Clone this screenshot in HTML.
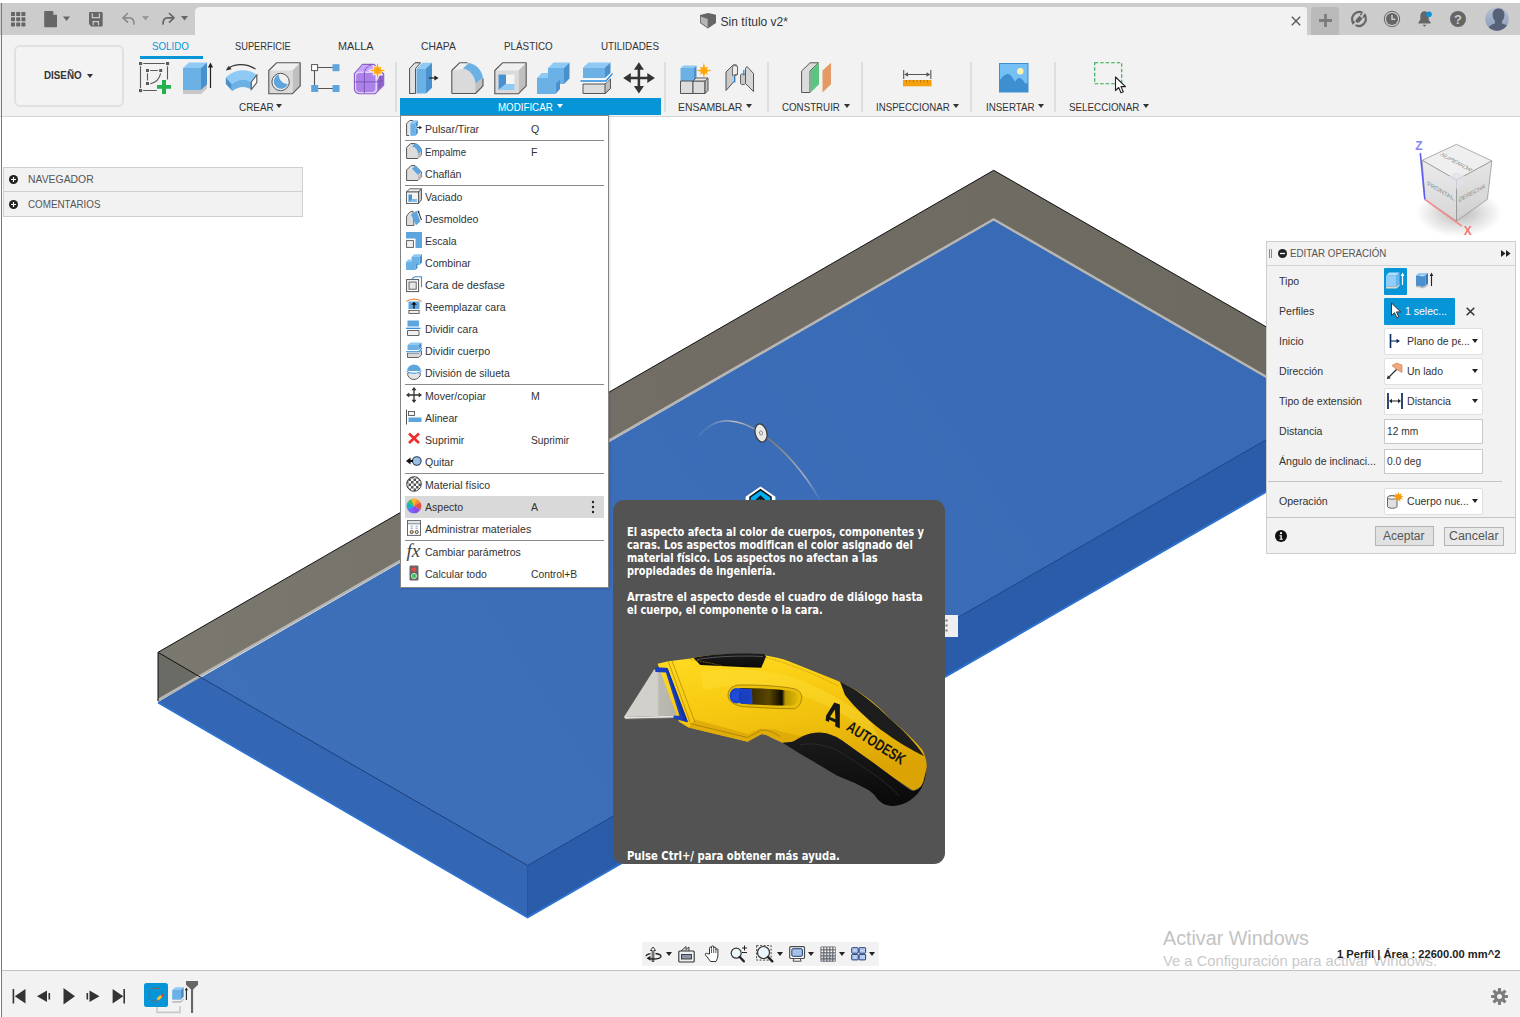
<!DOCTYPE html>
<html lang="es">
<head>
<meta charset="utf-8">
<title>Sin título v2* - Fusion 360</title>
<style>
html,body{margin:0;padding:0;}
body{width:1520px;height:1017px;overflow:hidden;background:#fff;position:relative;font-family:"Liberation Sans",Arial,sans-serif;font-size:11px;color:#333;}
.a{position:absolute;}
.t{position:absolute;white-space:nowrap;line-height:14px;height:14px;}
svg{position:absolute;overflow:visible;}
</style>
</head>
<body>
<!-- 3D scene -->
<svg class="a" style="left:0;top:0" width="1520" height="1017" viewBox="0 0 1520 1017">
  <defs>
    <linearGradient id="gTop" x1="0" y1="0" x2="1" y2="0">
      <stop offset="0" stop-color="#7b7870"/><stop offset=".45" stop-color="#716d65"/><stop offset="1" stop-color="#6c6961"/>
    </linearGradient>
    <linearGradient id="gBlue" gradientUnits="userSpaceOnUse" x1="300" y1="800" x2="1100" y2="250">
      <stop offset="0" stop-color="#3e70ba"/><stop offset="1" stop-color="#386ab5"/>
    </linearGradient>
  </defs>
  <!-- blue silhouette -->
  <polygon points="158,702.3 993.7,220.3 1367.4,436.2 1367.4,434 527.6,917.500" fill="url(#gBlue)"/>
  <!-- front-left face -->
  <polygon points="158,702.3 200.500,677.200 527.6,865.500 527.6,917.500" fill="#3367b4"/>
  <!-- front-right face -->
  <polygon points="527.6,865.500 1367.4,381.400 1367.4,433.700 527.6,917.500" fill="#2b5ca9"/>
  <!-- grey top strip -->
  <polygon points="158,652.300 993.7,170.3 1367.4,385 1367.4,436.2 993.7,220.3 158,701.200" fill="url(#gTop)"/>
  <!-- grey left triangle -->
  <polygon points="158,652.300 200.500,677.200 158,701.200" fill="#6b6b65"/>
  <!-- light line -->
  <polyline points="157.500,700.400 993.7,219.300 1367.4,435.200" fill="none" stroke="#b7b6b2" stroke-width="2.400"/>
  <!-- black edges -->
  <polyline points="158,701 158,652.300 993.7,170.3 1367.4,385" fill="none" stroke="#111" stroke-width="1"/>
  <line x1="158" y1="652.300" x2="200.500" y2="677.200" stroke="#111" stroke-width="1"/>
  <line x1="200.500" y1="677.200" x2="527.6" y2="865.500" stroke="#1c3f7c" stroke-width="1"/>
  <line x1="527.6" y1="865.500" x2="1367.4" y2="381.400" stroke="#1d468c" stroke-width="1"/>
  <line x1="527.6" y1="865.500" x2="527.6" y2="917" stroke="#2556a2" stroke-width="1"/>
  <!-- bright bottom edges -->
  <polyline points="158,702.3 527.6,917.300 1367.4,433.500" fill="none" stroke="#2e72cf" stroke-width="2"/>
</svg>
<!-- manipulators, distance field stub and view cube -->
<svg class="a" style="left:0;top:0" width="1520" height="1017" viewBox="0 0 1520 1017">
<defs>
<linearGradient id="arcG" gradientUnits="userSpaceOnUse" x1="699" y1="436" x2="820" y2="500"><stop offset="0" stop-color="#8fa3c4" stop-opacity=".2"/><stop offset=".18" stop-color="#b9bcc2"/><stop offset=".45" stop-color="#7b7b7d"/><stop offset=".6" stop-color="#8a8b8f"/><stop offset=".82" stop-color="#a9b2c2"/><stop offset="1" stop-color="#7d97c6" stop-opacity=".2"/></linearGradient>
<radialGradient id="vcSh" cx=".5" cy=".5" r=".5"><stop offset="0" stop-color="#000" stop-opacity=".28"/><stop offset=".55" stop-color="#000" stop-opacity=".12"/><stop offset="1" stop-color="#000" stop-opacity="0"/></radialGradient>
<linearGradient id="vcF" x1="0" y1="0" x2="0" y2="1"><stop offset="0" stop-color="#ebebeb"/><stop offset="1" stop-color="#d6d6d6"/></linearGradient>
<linearGradient id="vcR" x1="0" y1="0" x2="0" y2="1"><stop offset="0" stop-color="#e6e6e6"/><stop offset="1" stop-color="#cfcfcf"/></linearGradient>
</defs>
<path d="M699 435.500C708 425 718 420.500 727.400 420.700 740 421 751 426 761 433 785 450 805 474 819.800 499.500" fill="none" stroke="url(#arcG)" stroke-width="1.500"/>
<ellipse cx="761" cy="433" rx="5.800" ry="9.200" transform="rotate(-14 761 433)" fill="#e9e9e9" stroke="#3c3c3c" stroke-width="1.300"/>
<ellipse cx="761" cy="433" rx="1.500" ry="2" transform="rotate(-14 761 433)" fill="none" stroke="#666" stroke-width=".7"/>
<!-- direction arrow glyph (mostly hidden behind the tooltip) -->
<path d="M760.500 487.300L774.700 497V508H746.300V497z" fill="#fff" stroke="#fff" stroke-width="1.400" stroke-linejoin="round"/>
<path d="M760.500 488.800L771.800 496.800V508H749.200V496.800z" fill="#101418"/>
<path d="M760.500 490.700L770.300 497.600V508H750.700V497.600z" fill="#00aeef"/>
<path d="M754.500 502.300L760.500 496.500 766.500 502.300M760.500 497.500V508" fill="none" stroke="#101418" stroke-width="1.900"/>
<!-- distance field stub -->
<rect x="945" y="615" width="13" height="22" fill="#efefef"/>
<circle cx="946.500" cy="620.400" r="1.250" fill="#8c8c8c"/><circle cx="946.500" cy="625.500" r="1.250" fill="#8c8c8c"/><circle cx="946.500" cy="630.500" r="1.250" fill="#8c8c8c"/>
<!-- view cube -->
<ellipse cx="1459" cy="213" rx="43" ry="24" fill="url(#vcSh)"/>
<path d="M1456.500 144.300L1491.900 160.900 1456.500 180.100 1422.200 160.300z" fill="#efefef" stroke="#8d8d8d" stroke-width=".7"/>
<path d="M1422.200 160.300L1456.500 180.100 1456.500 221 1424.800 199.300z" fill="url(#vcF)" stroke="#8d8d8d" stroke-width=".7"/>
<path d="M1456.500 180.100L1491.900 160.900 1487.400 199.300 1456.500 221z" fill="url(#vcR)" stroke="#8d8d8d" stroke-width=".7"/>
<path d="M1456.500 172l7.500 4v8.500l-7.500 4.500-7.500-4.500V176z" fill="#dfe3ea" opacity=".7"/>
<g font-family="Liberation Sans,Arial,sans-serif" font-size="6.800" fill="#858a90" text-anchor="middle">
<text transform="matrix(.8575 .495 .065 .975 1422.200 160.300)" x="20" y="23.500">FRONTAL</text>
<text transform="matrix(.8 -.43 -.1 .97 1458 181)" x="20" y="23.500">DERECHA</text>
<text transform="matrix(.8575 .47 -.8575 .4 1456.500 144.300)" x="20.500" y="23">SUPERIOR</text>
</g>
<path d="M1420.300 153.200L1424.800 199.300" stroke="#5c5cf2" stroke-width="1.600"/>
<path d="M1424.800 199.300L1461.800 226" stroke="#f28c8c" stroke-width="1.600"/>
<text x="1419" y="150" font-family="Liberation Sans,Arial,sans-serif" font-size="12" font-weight="bold" fill="#8686f7" text-anchor="middle">Z</text>
<text x="1467.800" y="235" font-family="Liberation Sans,Arial,sans-serif" font-size="12" font-weight="bold" fill="#f27878" text-anchor="middle">X</text>
</svg>
<!-- title / tab strip -->
<div class="a" style="left:0;top:3px;width:1520px;height:32px;background:#cccccc"></div>
<div class="a" style="left:195px;top:7px;width:1112px;height:28px;background:#f2f2f2;border-radius:5px 3px 0 0"></div>
<div class="a" style="left:1311px;top:7px;width:28px;height:28px;background:#bababa;border-radius:3px 3px 0 0"></div>
<!-- ribbon background -->
<div class="a" style="left:0;top:35px;width:1520px;height:81px;background:#f2f2f2"></div>
<div class="a" style="left:0;top:116px;width:1520px;height:1px;background:#d4d4d4"></div>
<!-- window left edge -->
<div class="a" style="left:1px;top:3px;width:1px;height:1014px;background:#7a7a7a"></div>
<!-- quick access icons -->
<svg style="left:11px;top:12px" width="15" height="15" viewBox="0 0 15 15"><g fill="#666">
<rect x="0" y="0" width="4" height="4" rx=".6"/><rect x="5.2" y="0" width="4" height="4" rx=".6"/><rect x="10.4" y="0" width="4" height="4" rx=".6"/>
<rect x="0" y="5.2" width="4" height="4" rx=".6"/><rect x="5.2" y="5.2" width="4" height="4" rx=".6"/><rect x="10.4" y="5.2" width="4" height="4" rx=".6"/>
<rect x="0" y="10.4" width="4" height="4" rx=".6"/><rect x="5.2" y="10.4" width="4" height="4" rx=".6"/><rect x="10.4" y="10.4" width="4" height="4" rx=".6"/></g></svg>
<svg style="left:44px;top:11px" width="30" height="17" viewBox="0 0 30 17"><path d="M1 0h8l4 4v11.5a.8.8 0 0 1-.8.8H1a.8.8 0 0 1-.8-.8V.8A.8.8 0 0 1 1 0z" fill="#666"/><path d="M9.3 0v3.8H13z" fill="#ccc"/><path d="M19 5.5h7l-3.5 4.5z" fill="#666"/></svg>
<svg style="left:89px;top:12px" width="13.700" height="14.600" viewBox="0 0 15 15" preserveAspectRatio="none"><path d="M1 0h13a1 1 0 0 1 1 1v12.8a1 1 0 0 1-1 1H2.5L0 12.3V1a1 1 0 0 1 1-1z" fill="#666"/><path d="M3.6 1.2v4.6h7.8V1.2M4.6 13.6V9.8h5.8v3.8" fill="none" stroke="#ccc" stroke-width="1.3"/></svg>
<svg style="left:121px;top:12px" width="70" height="15" viewBox="0 0 70 15"><path d="M6.5 1.5L2 5.8l4.500 4.300M2.300 5.800h6.200c3.200 0 4.500 2.200 4.500 6.200" fill="none" stroke="#8c8c8c" stroke-width="1.7" stroke-linecap="round" stroke-linejoin="round"/><path d="M21 4h7l-3.500 4.500z" fill="#999"/><path transform="translate(2 0)" d="M46.500 1.500L51 5.800l-4.500 4.300M50.700 5.800h-6.200c-3.200 0-4.500 2.200-4.500 6.200" fill="none" stroke="#666" stroke-width="1.700" stroke-linecap="round" stroke-linejoin="round"/><path d="M60 4h7l-3.500 4.500z" fill="#666"/></svg>
<!-- document tab title -->
<svg style="left:700px;top:13px" width="17" height="16" viewBox="0 0 17 16"><path d="M0 2.100L8.200 .100 16 1.700V10L7.800 15.500 0 10z" fill="#666"/><path d="M.8 3.400L7.700 6.100v8.500L.8 9.600z" fill="#b5b5b5"/></svg>
<span class="t" style="left:720.600px;top:14.700px;font-size:12px;color:#333;letter-spacing:0px">Sin título v2*</span>
<svg style="left:1291px;top:16px" width="10" height="10" viewBox="0 0 10 10"><path d="M.8.8l8.400 8.400M9.200.8L.8 9.200" stroke="#555" stroke-width="1.300"/></svg>
<svg style="left:1318.500px;top:14px" width="13" height="13" viewBox="0 0 13 13"><path d="M6.500 0v13M0 6.500h13" stroke="#7c7c7c" stroke-width="2.800"/></svg>
<!-- right icons -->
<svg style="left:1350px;top:10px" width="18" height="18" viewBox="0 0 18 18"><path d="M3.300 12.800A7 7 0 0 1 12.500 2.900M14.700 5.200A7 7 0 0 1 5.500 15.100" fill="none" stroke="#666" stroke-width="2.100"/><path d="M1.200 11.200l4.300 .3-2.600 3.400zM16.800 6.800l-4.300-.3 2.600-3.400z" fill="#666"/><path d="M6.200 9.200l3.400-3.400 3 3-3.400 3.400c-1 1-2.300 .8-3-.1-.8-.8-1-2 0-2.900z" fill="#666"/><path d="M10.300 5.200l1.800-1.800M12.800 7.700l1.800-1.800" stroke="#666" stroke-width="1.300"/></svg>
<svg style="left:1383px;top:10px" width="18" height="18" viewBox="0 0 18 18"><circle cx="9" cy="9" r="7.700" fill="none" stroke="#666" stroke-width="1"/><circle cx="9" cy="9" r="6" fill="#666"/><path d="M9 5v4.300h3.300" fill="none" stroke="#ccc" stroke-width="1.500"/></svg>
<svg style="left:1418px;top:10px" width="15" height="18" viewBox="0 0 15 18"><path d="M6.500 1.200c-2.700 0-4.200 2.100-4.200 4.800v3.700L.4 12.500v1h12.200v-1l-1.900-2.800V6c0-2.700-1.500-4.800-4.200-4.800z" fill="#666"/><path d="M4.600 14.800h3.800l-1.900 1.900z" fill="#666"/><circle cx="11" cy="4.300" r="2.800" fill="#0696d7"/></svg>
<svg style="left:1449px;top:10px" width="18" height="18" viewBox="0 0 18 18"><circle cx="9" cy="9" r="8" fill="#666"/><text x="9" y="13.500" font-family="Liberation Sans,sans-serif" font-size="13" font-weight="bold" fill="#ccc" text-anchor="middle">?</text></svg>
<svg style="left:1485px;top:7px" width="24" height="24" viewBox="0 0 24 24"><defs><linearGradient id="av" x1="0" y1="0" x2="0" y2="1"><stop offset="0" stop-color="#b9c3d4"/><stop offset="1" stop-color="#8799b9"/></linearGradient><clipPath id="avc"><circle cx="12" cy="12" r="11.800"/></clipPath></defs><circle cx="12" cy="12" r="11.800" fill="url(#av)"/><g clip-path="url(#avc)" fill="#566178"><path d="M13.500 1.500c3.800 0 6 2.600 6 6.200 0 2.600-1.200 5.200-2.600 6.600v2.300c3.500 1 6.500 2.300 7.500 4.500v4H3v-3.500c1-2.400 3.800-4 7-5v-2.600C8.600 12.600 7.600 10.300 7.600 7.700c0-3.600 2.100-6.200 5.900-6.200z"/></g></svg>
<!-- ribbon: workspace button, separators, active group -->
<div class="a" style="left:13.500px;top:45px;width:110px;height:61.500px;border:2px solid #e0e0e0;border-radius:6px;box-sizing:border-box;background:#f3f3f3"></div>
<div class="a" style="left:140px;top:56px;width:63px;height:3px;background:#0696d7"></div>
<div class="a" style="left:400px;top:98px;width:261px;height:17px;background:#0696d7"></div>
<div class="a" style="left:395.2px;top:62px;width:2px;height:50px;background:#dedede"></div>
<div class="a" style="left:664.2px;top:62px;width:2px;height:50px;background:#dedede"></div>
<div class="a" style="left:766.7px;top:62px;width:2px;height:50px;background:#dedede"></div>
<div class="a" style="left:860.7px;top:62px;width:2px;height:50px;background:#dedede"></div>
<div class="a" style="left:970.2px;top:62px;width:2px;height:50px;background:#dedede"></div>
<div class="a" style="left:1053.7px;top:62px;width:2px;height:50px;background:#dedede"></div>
<!-- CREAR icons -->
<svg style="left:139px;top:62px" width="33" height="32" viewBox="0 0 33 32"><g fill="none" stroke="#5a5a5a" stroke-width="1.100"><path d="M4.100 1.500h21.700M1.500 4.200v21.800M28.500 4.200v13.400M4.100 28.500h13.700"/><path d="M11.200 8.500h7.600M8.500 11.300v7.300"/><path d="M21.600 11.300c-1 5.500-4.500 9-10.400 10.500"/></g><g fill="#5a5a5a"><rect x="0" y="0" width="3.100" height="3.100"/><rect x="27" y="0" width="3.100" height="3.100"/><rect x="0" y="27" width="3.100" height="3.100"/><rect x="7" y="7" width="3" height="3"/><rect x="20.200" y="7" width="3" height="3"/><rect x="7" y="20" width="3" height="3"/></g><path d="M23 18.100h4v5h5v3.700h-5v5.100h-4v-5.100h-5v-3.700h5z" fill="#22b14c"/></svg>
<svg style="left:183px;top:61.500px" width="31" height="33" viewBox="0 0 31 33"><path d="M0 28l18 0 6-5.500v4L18 32H0z" fill="#c8c8c8"/><path d="M0 6L6 .5h18L18 6z" fill="#8fcaf5"/><path d="M0 6h18v22H0z" fill="#6cb1e6"/><path d="M18 6l6-5.500v22L18 28z" fill="#4a90cc"/><path d="M27.500 3v23" stroke="#222" stroke-width="1.200"/><path d="M27.500 .5l2.600 5h-5.200z" fill="#222"/></svg>
<svg style="left:225px;top:63px" width="33" height="29" viewBox="0 0 33 29"><path d="M2 6.500C8 .8 20 -.6 30.500 6" fill="none" stroke="#333" stroke-width="1.200"/><path d="M.8 7.500l5.700-1.200-2.800-3.600z" fill="#333"/><path d="M.8 14.500c8-8.500 22-10 31-2.500l-5.500 7c-6-4-13-3.500-19.500 2z" fill="#8fcaf5"/><path d="M.8 14.500l6 6.500v6.500L.8 21z" fill="#4a90cc"/><path d="M6.800 21c6.500-5.500 13.500-6 19.500-2v7.500c-6-4-13-3.500-19.500 2z" fill="#6cb1e6"/><path d="M26.300 19l5.500-7v7.500l-5.500 7z" fill="#fff" stroke="#555" stroke-width="1.100"/></svg>
<svg style="left:268px;top:61.500px" width="33" height="33" viewBox="0 0 33 33"><path d="M.8 8.500L8.500 .8h23.700L24.500 8.500z" fill="#f0f0f0"/><path d="M24.500 8.500L32.200 .8v23L24.500 31.700z" fill="#c0c0c0"/><rect x=".8" y="8.500" width="23.700" height="23.200" fill="#dadada"/><path d="M.8 8.500L8.500 .8h23.700v23L24.500 31.700H.8z" fill="none" stroke="#555" stroke-width="1.100" stroke-linejoin="round"/><circle cx="12.600" cy="20" r="8.700" fill="#f0f0f0" stroke="#555" stroke-width="1"/><path d="M10.700 12.600a7.300 7.300 0 1 0 9.200 9.600c-5.300-.3-9-4-9.200-9.600z" fill="#5ea5de"/></svg>
<svg style="left:310.500px;top:64px" width="30" height="29" viewBox="0 0 30 29"><path d="M3.500 3.500h22M3.500 3.500v21M3.500 24.500h22" fill="none" stroke="#555" stroke-width="1.100"/><rect x=".6" y=".6" width="6" height="6" fill="#fff" stroke="#555" stroke-width="1"/><rect x="21.500" y=".2" width="7" height="7" fill="#5ea5de"/><rect x=".2" y="21" width="7" height="7" fill="#5ea5de"/><rect x="21.500" y="21" width="7" height="7" fill="#5ea5de"/></svg>
<svg style="left:354px;top:61px" width="33" height="34" viewBox="0 0 33 34"><path d="M.4 12.600L8.500 3.400H20L29.700 13V24L21 32.800H5.800C2.500 32.800 .4 30.800 .4 27.500z" fill="#dfcffb" stroke="#8a5cc4" stroke-width="1.100" stroke-linejoin="round"/><path d="M2 11.600L8.900 4.300H19.500L25 10.500H5c-1.500 0-2.500 .400-3 1.100z" fill="#c9a2ff"/><path d="M23.300 16L29.200 13.800V23.800L23.300 29.800z" fill="#8f62d0"/><rect x="2.100" y="11.900" width="19.300" height="19" rx="3.600" fill="#ac82e8"/><path d="M10.400 11.500V32.400M.6 20.900H22.500L29.300 19.200M10.400 12C10.700 8 13 5 17.500 4M26.300 15V26.500" fill="none" stroke="#7e57b8" stroke-width="1"/><path d="M23.50 1.20 24.69 6.64 27.74 5.26 26.36 8.31 31.80 9.50 26.36 10.69 27.74 13.74 24.69 12.36 23.50 17.80 22.31 12.36 19.26 13.74 20.64 10.69 15.20 9.50 20.64 8.31 19.26 5.26 22.31 6.64z" fill="#fff" stroke="#fff" stroke-width="1.600" stroke-linejoin="round" opacity=".85"/><path d="M23.50 1.20 24.69 6.64 27.74 5.26 26.36 8.31 31.80 9.50 26.36 10.69 27.74 13.74 24.69 12.36 23.50 17.80 22.31 12.36 19.26 13.74 20.64 10.69 15.20 9.50 20.64 8.31 19.26 5.26 22.31 6.64z" fill="#ffa600"/></svg>
<!-- MODIFICAR icons -->
<svg style="left:409px;top:61.500px" width="30" height="33" viewBox="0 0 30 33"><path d="M.6 6.500L6 .8h5M.6 6.500v25h5.500" fill="#dcdcdc" stroke="#555" stroke-width="1"/><path d="M.6 6.500L6 .8h5.500L6.500 6.500v25H.6z" fill="#e2e2e2" stroke="#555" stroke-width="1"/><path d="M7.500 6.500L13.500 .8h9.500L17 6.500z" fill="#8fcaf5"/><path d="M7.500 6.500H17v25H7.500z" fill="#6cb1e6"/><path d="M17 6.500L23 .8v25L17 31.500z" fill="#4a90cc"/><path d="M20 16h7.500" stroke="#222" stroke-width="1.200"/><path d="M29.600 16l-4.200 2.600v-5.200z" fill="#222"/></svg>
<svg style="left:451px;top:61.500px" width="33" height="33" viewBox="0 0 33 33"><path d="M.8 31.500V8.500L8.500 .8h8c7 1 14 7 15.500 15v8l-7.500 7.700z" fill="#dadada"/><path d="M.8 8.500L8.500 .8h8L12 7z" fill="#f0f0f0"/><path d="M24.500 31.500V22l7.500-6.200v8z" fill="#c0c0c0"/><path d="M12 6.500L18 .9c7 1.200 12.500 6.500 14 14.500l-7.300 6.400c-.8-8-5.700-14-12.700-15.300z" fill="#6cb1e6"/><path d="M.8 31.500V8.500L8.500 .8h8M32 16.500v7.300l-7.500 7.700H.8" fill="none" stroke="#555" stroke-width="1.100" stroke-linejoin="round"/></svg>
<svg style="left:494px;top:61.500px" width="33" height="33" viewBox="0 0 33 33"><path d="M.8 8.500L8.500 .8h23.700L24.500 8.500z" fill="#f0f0f0"/><path d="M24.500 8.500L32.200 .8v23L24.500 31.700z" fill="#c0c0c0"/><rect x=".8" y="8.500" width="23.700" height="23.200" fill="#dadada"/><path d="M.8 8.500L8.500 .8h23.700v23L24.500 31.700H.8z" fill="none" stroke="#555" stroke-width="1.100" stroke-linejoin="round"/><rect x="4.500" y="12.500" width="16" height="15.500" fill="#f4f4f4"/><path d="M4.500 12.500h7.500v9.500l-7.500 6z" fill="#4a90cc"/><path d="M12 22h8.500v6h-16z" fill="#8fcaf5"/></svg>
<svg style="left:537px;top:61.500px" width="33" height="33" viewBox="0 0 33 33"><path d="M11 6L16.500 .5h16L27 6z" fill="#8fcaf5"/><path d="M27 6L32.500 .5v16L27 22z" fill="#4a90cc"/><path d="M0 16l4.500-5H11l0 5z" fill="#8fcaf5"/><path d="M11 6h16v16h-8.500v10H0V16h11z" fill="#6cb1e6"/><path d="M18.500 22L23 17.500V27l-4.500 5z" fill="#4a90cc"/></svg>
<svg style="left:579.500px;top:61.500px" width="34" height="33" viewBox="0 0 34 33"><path d="M3 22h22l5.500-5v9.500L25 31.500H3z" fill="#dcdcdc" stroke="#555" stroke-width="1"/><path d="M25 22l5.500-5v9.500L25 31.500z" fill="#bdbdbd" stroke="#555" stroke-width="1"/><path d="M3 5.500L8.500 .5h22L25 5.500z" fill="#8fcaf5"/><path d="M3 5.500h22V16H3z" fill="#6cb1e6"/><path d="M25 5.500l5.500-5V11L25 16z" fill="#4a90cc"/><path d="M.5 19h25.500l6.500-7.500" fill="none" stroke="#fff" stroke-width="3"/><path d="M.5 19h25.500l6.500-7.500" fill="none" stroke="#1e88e0" stroke-width="1.300"/></svg>
<svg style="left:623px;top:62px" width="32" height="32" viewBox="0 0 32 32"><path d="M15.900 5v22M5 15.900h22" stroke="#333" stroke-width="2.500"/><path d="M15.900 .200l5 7.600h-10zM15.900 31.600l5-7.600h-10zM.200 15.900l7.600-5v10zM31.900 15.900l-7.600-5v10z" fill="#333"/></svg>
<!-- ENSAMBLAR icons -->
<svg style="left:679.500px;top:62px" width="33" height="32" viewBox="0 0 33 32"><path d="M.5 6L3.500 3.500h13L14 6z" fill="#8fcaf5"/><path d="M.5 6H14v13H.5z" fill="#6cb1e6"/><path d="M14 6l2.500-2.500v11L14 19z" fill="#4a90cc"/><path d="M.5 19H13v12.500H.5z" fill="#dcdcdc" stroke="#555" stroke-width="1"/><path d="M13 19h12v12.500H13z" fill="#dcdcdc" stroke="#555" stroke-width="1"/><path d="M13 19l3-3h12l-3 3z" fill="#ececec" stroke="#555" stroke-width="1"/><path d="M25 19l3-3v12.500l-3 3z" fill="#bdbdbd" stroke="#555" stroke-width="1"/><path d="M23.90 0.60 25.05 5.83 28.00 4.50 26.67 7.45 31.90 8.60 26.67 9.75 28.00 12.70 25.05 11.37 23.90 16.60 22.75 11.37 19.80 12.70 21.13 9.75 15.90 8.60 21.13 7.45 19.80 4.50 22.75 5.83z" fill="#ffa600"/></svg>
<svg style="left:724.500px;top:63.500px" width="30" height="29" viewBox="0 0 30 29"><path d="M1 8L7.500 1.500c2-1.500 5-1 5 1.500v7.500l-3 1.500V17L1 26.500z" fill="#c9c9c9" stroke="#555" stroke-width="1"/><path d="M7.500 3.500c0-2.500 5-2.500 5 0V10l-5 1.500z" fill="#ececec" stroke="#555" stroke-width=".8"/><path d="M20.500 4.500L22 2.500l6.500 7v18l-8-8z" fill="#d6d6d6" stroke="#555" stroke-width="1"/><path d="M15.500 11c0-1.500 5-1.500 5 0v8.500c0 1.500-5 1.500-5 0z" fill="#c9c9c9" stroke="#555" stroke-width=".9"/><path d="M9.800 12.500v6M18.800 6v5.500" stroke="#1e88e0" stroke-width="1.200"/></svg>
<!-- CONSTRUIR icon -->
<svg style="left:801px;top:62px" width="31" height="31" viewBox="0 0 31 31"><path d="M.6 9L9 .8h8.500L9 9v21.500H.6z" fill="#dcdcdc" stroke="#555" stroke-width="1"/><path d="M9.600 9L18 .8v21.500L9.600 30.500z" fill="#5bc47e"/><path d="M21.500 8.500L30 .8v21.500L21.500 30.500z" fill="#e49a64"/></svg>
<!-- INSPECCIONAR icon -->
<svg style="left:903px;top:70px" width="29" height="17" viewBox="0 0 29 17"><path d="M.7 0v9M27.800 0v9M2.500 4.500h23.500" stroke="#555" stroke-width="1.100" fill="none"/><path d="M1.200 4.500l3.800-2.200v4.400zM27.300 4.500l-3.800-2.200v4.400z" fill="#555"/><rect x="0" y="10" width="28.500" height="6.300" fill="#f5a10e"/><path d="M3.500 10v2.500M7 10v1.800M10.500 10v2.500M14 10v1.800M17.500 10v2.500M21 10v1.800M24.500 10v2.500" stroke="#a86a00" stroke-width=".8"/></svg>
<!-- INSERTAR icon -->
<svg style="left:999px;top:63px" width="30" height="30" viewBox="0 0 30 30"><rect x=".5" y=".5" width="28.500" height="28.500" fill="#74c0f5" stroke="#3f8fd0" stroke-width="1"/><path d="M.5 18c3-5 6-7 8.500-7s5 4 7 8c1.500-3 3-4 4.500-4s3.500 2 5 4.500c1 1.200 2 1.500 3.500 .5V29H.5z" fill="#3d8fcf"/><circle cx="21.300" cy="8.200" r="3.200" fill="#fdf1b0"/></svg>
<!-- SELECCIONAR icon -->
<svg style="left:1093.500px;top:62px" width="33" height="32" viewBox="0 0 33 32"><rect x=".7" y=".7" width="27" height="21" fill="none" stroke="#2aa84a" stroke-width="1.100" stroke-dasharray="3.500 2"/><path d="M21.500 15v13.500l3.200-3 2.300 5.300 2.300-1-2.300-5.200h4.500z" fill="#fff" stroke="#222" stroke-width="1.100" stroke-linejoin="round"/></svg>
<!-- toolbar text -->
<span class="t" style="left:152.3px;top:39.2px;font-size:11px;color:#0696d7;transform:scaleX(0.888);transform-origin:0 0;">SOLIDO</span>
<span class="t" style="left:234.7px;top:39.2px;font-size:11px;color:#333;transform:scaleX(0.845);transform-origin:0 0;">SUPERFICIE</span>
<span class="t" style="left:337.6px;top:39.2px;font-size:11px;color:#333;transform:scaleX(0.984);transform-origin:0 0;">MALLA</span>
<span class="t" style="left:420.6px;top:39.2px;font-size:11px;color:#333;transform:scaleX(0.938);transform-origin:0 0;">CHAPA</span>
<span class="t" style="left:503.9px;top:39.2px;font-size:11px;color:#333;transform:scaleX(0.895);transform-origin:0 0;">PLÁSTICO</span>
<span class="t" style="left:601.4px;top:39.2px;font-size:11px;color:#333;transform:scaleX(0.895);transform-origin:0 0;">UTILIDADES</span>
<span class="t" style="left:238.6px;top:100.2px;font-size:11px;color:#333;transform:scaleX(0.901);transform-origin:0 0;">CREAR</span>
<svg style="left:276.3px;top:104px" width="6" height="4" viewBox="0 0 6 4"><path d="M0 0h6L3 4z" fill="#333"/></svg>
<span class="t" style="left:498.1px;top:100.2px;font-size:11px;color:#fff;transform:scaleX(0.886);transform-origin:0 0;">MODIFICAR</span>
<svg style="left:556.6px;top:104px" width="6" height="4" viewBox="0 0 6 4"><path d="M0 0h6L3 4z" fill="#fff"/></svg>
<span class="t" style="left:678.4px;top:100.2px;font-size:11px;color:#333;transform:scaleX(0.949);transform-origin:0 0;">ENSAMBLAR</span>
<svg style="left:745.5px;top:104px" width="6" height="4" viewBox="0 0 6 4"><path d="M0 0h6L3 4z" fill="#333"/></svg>
<span class="t" style="left:782.0px;top:100.2px;font-size:11px;color:#333;transform:scaleX(0.885);transform-origin:0 0;">CONSTRUIR</span>
<svg style="left:843.7px;top:104px" width="6" height="4" viewBox="0 0 6 4"><path d="M0 0h6L3 4z" fill="#333"/></svg>
<span class="t" style="left:875.6px;top:100.2px;font-size:11px;color:#333;transform:scaleX(0.880);transform-origin:0 0;">INSPECCIONAR</span>
<svg style="left:953.4px;top:104px" width="6" height="4" viewBox="0 0 6 4"><path d="M0 0h6L3 4z" fill="#333"/></svg>
<span class="t" style="left:985.6px;top:100.2px;font-size:11px;color:#333;transform:scaleX(0.892);transform-origin:0 0;">INSERTAR</span>
<svg style="left:1038.0px;top:104px" width="6" height="4" viewBox="0 0 6 4"><path d="M0 0h6L3 4z" fill="#333"/></svg>
<span class="t" style="left:1068.9px;top:100.2px;font-size:11px;color:#333;transform:scaleX(0.892);transform-origin:0 0;">SELECCIONAR</span>
<svg style="left:1143.0px;top:104px" width="6" height="4" viewBox="0 0 6 4"><path d="M0 0h6L3 4z" fill="#333"/></svg>
<span class="t" style="left:43.7px;top:67.8px;font-size:11px;color:#333;font-weight:bold;transform:scaleX(0.892);transform-origin:0 0;">DISEÑO</span>
<svg style="left:87.400px;top:74px" width="6" height="4" viewBox="0 0 6 4"><path d="M0 0h6L3 4z" fill="#333"/></svg>
<!-- MODIFICAR drop-down menu -->
<div class="a" style="left:400px;top:115px;width:207px;height:470.500px;background:#fff;border:1px solid #858585;box-shadow:1px 1px 2px rgba(0,0,0,.12)"></div>
<div class="a" style="left:405px;top:496px;width:199px;height:22px;background:#d9d9d9"></div>
<div class="a" style="left:405px;top:140.0px;width:199px;height:1px;background:#8a8a8a"></div>
<div class="a" style="left:405px;top:185.0px;width:199px;height:1px;background:#8a8a8a"></div>
<div class="a" style="left:405px;top:384.0px;width:199px;height:1px;background:#8a8a8a"></div>
<div class="a" style="left:405px;top:472.5px;width:199px;height:1px;background:#8a8a8a"></div>
<div class="a" style="left:405px;top:540.0px;width:199px;height:1px;background:#8a8a8a"></div>
<span class="t" style="left:425.0px;top:122.2px;font-size:11px;color:#333;transform:scaleX(0.959);transform-origin:0 0;">Pulsar/Tirar</span>
<span class="t" style="left:530.9px;top:122.2px;font-size:11px;color:#333;transform:scaleX(0.960);transform-origin:0 0;">Q</span>
<span class="t" style="left:425.0px;top:145.2px;font-size:11px;color:#333;transform:scaleX(0.885);transform-origin:0 0;">Empalme</span>
<span class="t" style="left:531.0px;top:145.2px;font-size:11px;color:#333;transform:scaleX(0.960);transform-origin:0 0;">F</span>
<span class="t" style="left:424.9px;top:167.2px;font-size:11px;color:#333;transform:scaleX(0.960);transform-origin:0 0;">Chaflán</span>
<span class="t" style="left:424.8px;top:190.2px;font-size:11px;color:#333;transform:scaleX(0.960);transform-origin:0 0;">Vaciado</span>
<span class="t" style="left:425.0px;top:212.2px;font-size:11px;color:#333;transform:scaleX(0.960);transform-origin:0 0;">Desmoldeo</span>
<span class="t" style="left:425.0px;top:234.2px;font-size:11px;color:#333;transform:scaleX(0.960);transform-origin:0 0;">Escala</span>
<span class="t" style="left:424.9px;top:256.2px;font-size:11px;color:#333;transform:scaleX(0.960);transform-origin:0 0;">Combinar</span>
<span class="t" style="left:424.9px;top:278.2px;font-size:11px;color:#333;transform:scaleX(0.990);transform-origin:0 0;">Cara de desfase</span>
<span class="t" style="left:425.0px;top:300.2px;font-size:11px;color:#333;transform:scaleX(0.962);transform-origin:0 0;">Reemplazar cara</span>
<span class="t" style="left:425.0px;top:322.2px;font-size:11px;color:#333;transform:scaleX(0.960);transform-origin:0 0;">Dividir cara</span>
<span class="t" style="left:425.0px;top:344.2px;font-size:11px;color:#333;transform:scaleX(0.968);transform-origin:0 0;">Dividir cuerpo</span>
<span class="t" style="left:425.0px;top:366.2px;font-size:11px;color:#333;transform:scaleX(0.956);transform-origin:0 0;">División de silueta</span>
<span class="t" style="left:425.0px;top:389.2px;font-size:11px;color:#333;transform:scaleX(0.960);transform-origin:0 0;">Mover/copiar</span>
<span class="t" style="left:531.0px;top:389.2px;font-size:11px;color:#333;transform:scaleX(0.960);transform-origin:0 0;">M</span>
<span class="t" style="left:424.8px;top:411.2px;font-size:11px;color:#333;transform:scaleX(0.960);transform-origin:0 0;">Alinear</span>
<span class="t" style="left:424.9px;top:433.2px;font-size:11px;color:#333;transform:scaleX(0.960);transform-origin:0 0;">Suprimir</span>
<span class="t" style="left:530.9px;top:433.2px;font-size:11px;color:#333;transform:scaleX(0.930);transform-origin:0 0;">Suprimir</span>
<span class="t" style="left:424.9px;top:455.2px;font-size:11px;color:#333;transform:scaleX(0.960);transform-origin:0 0;">Quitar</span>
<span class="t" style="left:425.0px;top:478.2px;font-size:11px;color:#333;transform:scaleX(0.960);transform-origin:0 0;">Material físico</span>
<span class="t" style="left:424.8px;top:500.2px;font-size:11px;color:#333;transform:scaleX(0.960);transform-origin:0 0;">Aspecto</span>
<span class="t" style="left:530.8px;top:500.2px;font-size:11px;color:#333;transform:scaleX(0.960);transform-origin:0 0;">A</span>
<span class="t" style="left:424.8px;top:522.2px;font-size:11px;color:#333;transform:scaleX(0.971);transform-origin:0 0;">Administrar materiales</span>
<span class="t" style="left:424.9px;top:545.2px;font-size:11px;color:#333;transform:scaleX(0.956);transform-origin:0 0;">Cambiar parámetros</span>
<span class="t" style="left:424.9px;top:567.2px;font-size:11px;color:#333;transform:scaleX(0.955);transform-origin:0 0;">Calcular todo</span>
<span class="t" style="left:530.9px;top:567.2px;font-size:11px;color:#333;transform:scaleX(0.939);transform-origin:0 0;">Control+B</span>
<svg style="left:591px;top:500px" width="4" height="14" viewBox="0 0 4 14"><circle cx="2" cy="2" r="1.200" fill="#222"/><circle cx="2" cy="7" r="1.200" fill="#222"/><circle cx="2" cy="12" r="1.200" fill="#222"/></svg>
<!-- menu icons -->
<svg style="left:406px;top:120.3px" width="16" height="16" viewBox="0 0 16 16"><path d="M3.200 15.500H.600V3.600L3.700 .500H7" fill="#e6e6e6" stroke="#555" stroke-width="1"/><path d="M4.300 3.300L7 .300h4.800L9.500 3.300z" fill="#8fcaf5"/><path d="M4.300 3.300h5.200v12.500H4.300z" fill="#6cb1e6"/><path d="M9.500 3.300L11.800 .300v12.700L9.500 15.800z" fill="#4a90cc"/><rect x="10.600" y="6.300" width="2.400" height="2.600" fill="#fff"/><path d="M11 7.600h3" stroke="#222" stroke-width="1"/><path d="M16 7.600l-2.600 1.900V5.700z" fill="#222"/></svg>
<svg style="left:406px;top:143.3px" width="16" height="16" viewBox="0 0 16 16"><path d="M.600 15.500V4.500L4.500 .600h3.500c4 .300 7 3.500 7.500 7.400v3.800L11.800 15.500z" fill="#dcdcdc" stroke="#555" stroke-width="1"/><path d="M11.800 15.500V11l3.700-3v3.800z" fill="#bdbdbd"/><path d="M6 3.200L9 .500c3.600 .700 6.200 3.500 6.700 7.300l-3.600 3.200C11.700 6.800 9.500 4 6 3.200z" fill="#5ea5de"/></svg>
<svg style="left:406px;top:165.3px" width="16" height="16" viewBox="0 0 16 16"><path d="M.600 15.500V5L5 .600h4l6.500 6.500v4.700L11.800 15.500z" fill="#dcdcdc" stroke="#555" stroke-width="1"/><path d="M11.800 15.500V11l3.700-3.200v4z" fill="#bdbdbd"/><path d="M6 3.800L9.500 .500l6 6-3.500 3.400z" fill="#5ea5de"/></svg>
<svg style="left:406px;top:188.3px" width="16" height="16" viewBox="0 0 16 16"><path d="M.5 4L3.500 .800h12L12.500 4z" fill="#f0f0f0" stroke="#555" stroke-width=".9"/><path d="M12.500 4L15.500 .800v11L12.500 15.500z" fill="#c6c6c6" stroke="#555" stroke-width=".9"/><rect x=".5" y="4" width="12" height="11.500" fill="#f4f4f4" stroke="#555" stroke-width=".9"/><path d="M2.500 6.500h3.500v4.500h4.500v3h-8z" fill="#4a90cc"/><path d="M6 11h4.500v3h-8z" fill="#7fbdf0"/></svg>
<svg style="left:406px;top:210.3px" width="16" height="16" viewBox="0 0 16 16"><path d="M.5 15.500V7C1.500 3.500 4 1.500 7 1l1 14.500z" fill="#dcdcdc" stroke="#555" stroke-width=".9"/><path d="M5 4.500L10.500 .800l4 10.500-4.500 4z" fill="#5ea5de"/><path d="M12.500 2l3 8" stroke="#222" stroke-width="1"/><path d="M11.800 .300l2.100 1.800-2.200 .8z" fill="#222"/></svg>
<svg style="left:406px;top:232.3px" width="16" height="16" viewBox="0 0 16 16"><path d="M0 0h16v16H9.500V6.500H0z" fill="#5ea5de"/><rect x=".6" y="8.600" width="6.800" height="6.800" fill="#f0f0f0" stroke="#555" stroke-width=".9"/></svg>
<svg style="left:406px;top:254.3px" width="16" height="16" viewBox="0 0 16 16"><path d="M5.500 3L8 .300h8L13.500 3z" fill="#8fcaf5"/><path d="M13.500 3L16 .300v8L13.500 11z" fill="#4a90cc"/><path d="M0 8l2-2.500h3.500V8z" fill="#8fcaf5"/><path d="M5.500 3h8v8H9.500v5H0V8h5.500z" fill="#6cb1e6"/><path d="M9.500 11l2-2v5l-2 2z" fill="#4a90cc"/></svg>
<svg style="left:406px;top:276.3px" width="16" height="16" viewBox="0 0 16 16"><path d="M6 2.500L9 .800h6.500v10.500" fill="none" stroke="#3f8fd0" stroke-width="1.100"/><rect x=".6" y="3.600" width="12" height="12" fill="#fff" stroke="#555" stroke-width="1"/><rect x="3" y="6" width="7.200" height="7.200" fill="#e6e6e6" stroke="#555" stroke-width=".9"/></svg>
<svg style="left:406px;top:298.3px" width="16" height="16" viewBox="0 0 16 16"><path d="M.5 3.500C4 .300 12 .300 15.500 3.500" fill="none" stroke="#f08a4b" stroke-width="1.100"/><rect x="2.500" y="3.500" width="11" height="7.500" fill="#5ea5de"/><path d="M8 10.500V6" stroke="#111" stroke-width="1.400"/><path d="M8 3.800l2.800 3H5.200z" fill="#111"/><rect x="2.900" y="12.400" width="10.200" height="3" fill="#f4f4f4" stroke="#555" stroke-width=".9"/></svg>
<svg style="left:406px;top:320.3px" width="16" height="16" viewBox="0 0 16 16"><rect x="1.500" y=".500" width="11.500" height="6" fill="#5ea5de"/><path d="M0 8.300h14.500" stroke="#1e88e0" stroke-width="1.200"/><path d="M1.500 10.500h11.500v5H1.500z" fill="#f0f0f0" stroke="#555" stroke-width=".9"/></svg>
<svg style="left:406px;top:342.3px" width="16" height="16" viewBox="0 0 16 16"><path d="M1.500 11h11l3-2.500v4.500l-3 2.500h-11z" fill="#d8d8d8" stroke="#555" stroke-width=".9"/><path d="M1.500 3L4.500 .500h11L12.500 3z" fill="#8fcaf5"/><path d="M1.500 3h11v5h-11z" fill="#6cb1e6"/><path d="M12.500 3l3-2.500v5l-3 2.500z" fill="#4a90cc"/><path d="M0 9.700h13l3-3.500" fill="none" stroke="#fff" stroke-width="2.200"/><path d="M0 9.700h13l3-3.500" fill="none" stroke="#1e88e0" stroke-width="1.100"/></svg>
<svg style="left:406px;top:364.3px" width="16" height="16" viewBox="0 0 16 16"><path d="M1.500 9.500a6.500 6 0 0 0 13 0z" fill="#e4e4e4" stroke="#555" stroke-width=".9"/><path d="M1 7a7 6.500 0 0 1 14 0z" fill="#5ea5de"/><path d="M.5 7c3 3 12 3 15 0" fill="none" stroke="#fff" stroke-width="2"/><path d="M.5 7c3 3 12 3 15 0" fill="none" stroke="#1e88e0" stroke-width="1"/></svg>
<svg style="left:406px;top:387.3px" width="16" height="16" viewBox="0 0 16 16"><path d="M8 2v12M2 8h12" stroke="#333" stroke-width="1.300"/><path d="M8 0l2.500 3.300h-5zM8 16l2.500-3.300h-5zM0 8l3.300-2.500v5zM16 8l-3.300-2.500v5z" fill="#333"/></svg>
<svg style="left:406px;top:409.3px" width="16" height="16" viewBox="0 0 16 16"><path d="M.5 .500v15" stroke="#555" stroke-width="1"/><rect x="2.500" y="2.500" width="6" height="4" fill="#f4f4f4" stroke="#555" stroke-width=".9"/><rect x="2.500" y="8.500" width="13" height="4.500" fill="#5ea5de"/></svg>
<svg style="left:406px;top:431.3px" width="16" height="16" viewBox="0 0 16 16"><path d="M3 2.500l10 9.500M13 2.500L3 12" stroke="#ee2c2c" stroke-width="2.600"/></svg>
<svg style="left:406px;top:453.3px" width="16" height="16" viewBox="0 0 16 16"><circle cx="10.800" cy="8" r="4.300" fill="#9dbfe6" stroke="#223a5e" stroke-width="1.100"/><path d="M3.500 8h3.500" stroke="#111" stroke-width="2.200"/><path d="M0 8l4.500-3.600v7.200z" fill="#111"/></svg>
<svg style="left:406px;top:476.3px" width="16" height="16" viewBox="0 0 16 16"><defs><pattern id="chk" width="5" height="5" patternUnits="userSpaceOnUse"><rect width="5" height="5" fill="#fff"/><rect width="2.500" height="2.500" fill="#555"/><rect x="2.500" y="2.500" width="2.500" height="2.500" fill="#555"/></pattern></defs><circle cx="8" cy="8" r="7.300" fill="url(#chk)" stroke="#444" stroke-width="1"/></svg>
<svg style="left:406px;top:498.3px" width="16" height="16" viewBox="0 0 16 16"><path d="M8 8L8 .700A7.300 7.300 0 0 1 14.320 4.350z" fill="#ff8a2b"/><path d="M8 8L14.320 4.350A7.300 7.300 0 0 1 14.320 11.650z" fill="#e4514a"/><path d="M8 8L14.320 11.650A7.300 7.300 0 0 1 8 15.300z" fill="#8a4de8"/><path d="M8 8L8 15.300A7.300 7.300 0 0 1 1.680 11.650z" fill="#7b61ff"/><path d="M8 8L1.680 11.650A7.300 7.300 0 0 1 1.680 4.350z" fill="#17b0c9"/><path d="M8 8L1.680 4.350A7.300 7.300 0 0 1 8 .700z" fill="#3cc05b"/><path d="M8 8L5 1.300A7.300 7.300 0 0 1 11 1.300z" fill="#ffb52b"/></svg>
<svg style="left:406px;top:520.3px" width="16" height="16" viewBox="0 0 16 16"><rect x="1.500" y=".600" width="13" height="14.800" fill="#fff" stroke="#666" stroke-width="1"/><rect x="2" y="1.100" width="12" height="2.400" fill="#dfe3ee"/><path d="M1.500 3.800h13" stroke="#666" stroke-width=".8"/><path d="M4.500 6.200h2.500M9.500 6.200h2.500M4.500 8.200h2.500M9.500 8.200h2.500" stroke="#8aa0c8" stroke-width=".9"/><circle cx="5.700" cy="12" r="1.600" fill="#f2c94c" stroke="#333" stroke-width=".8"/><circle cx="10.700" cy="12" r="1.600" fill="#ddd" stroke="#333" stroke-width=".8"/></svg>
<svg style="left:406px;top:565.3px" width="16" height="16" viewBox="0 0 16 16"><rect x="3.500" y=".500" width="9" height="15" rx="1.200" fill="#666"/><circle cx="8" cy="4.500" r="2.300" fill="#ee4848"/><circle cx="8" cy="11" r="2.600" fill="#3cc05b" stroke="#dff5e4" stroke-width=".8"/></svg>
<span class="t" style="left:406.500px;top:539.500px;font-family:'Liberation Serif',serif;font-style:italic;font-size:19px;line-height:22px;height:22px;color:#444;letter-spacing:0px">fx</span>
<!-- Aspecto tooltip -->
<div class="a" style="left:613px;top:500px;width:332px;height:364px;background:#535353;border-radius:11px"></div>
<span class="t" style="left:626.5px;top:525.0px;font-size:11.6px;color:#fff;font-family:'DejaVu Sans Condensed','DejaVu Sans',sans-serif;font-weight:bold;transform:scaleX(0.947);transform-origin:0 0;">El aspecto afecta al color de cuerpos, componentes y</span>
<span class="t" style="left:626.9px;top:538.0px;font-size:11.6px;color:#fff;font-family:'DejaVu Sans Condensed','DejaVu Sans',sans-serif;font-weight:bold;transform:scaleX(0.945);transform-origin:0 0;">caras. Los aspectos modifican el color asignado del</span>
<span class="t" style="left:626.6px;top:551.1px;font-size:11.6px;color:#fff;font-family:'DejaVu Sans Condensed','DejaVu Sans',sans-serif;font-weight:bold;transform:scaleX(0.946);transform-origin:0 0;">material físico. Los aspectos no afectan a las</span>
<span class="t" style="left:626.6px;top:563.9px;font-size:11.6px;color:#fff;font-family:'DejaVu Sans Condensed','DejaVu Sans',sans-serif;font-weight:bold;transform:scaleX(0.940);transform-origin:0 0;">propiedades de ingeniería.</span>
<span class="t" style="left:627.2px;top:590.1px;font-size:11.6px;color:#fff;font-family:'DejaVu Sans Condensed','DejaVu Sans',sans-serif;font-weight:bold;transform:scaleX(0.949);transform-origin:0 0;">Arrastre el aspecto desde el cuadro de diálogo hasta</span>
<span class="t" style="left:626.9px;top:602.9px;font-size:11.6px;color:#fff;font-family:'DejaVu Sans Condensed','DejaVu Sans',sans-serif;font-weight:bold;transform:scaleX(0.943);transform-origin:0 0;">el cuerpo, el componente o la cara.</span>
<span class="t" style="left:626.5px;top:849.1px;font-size:11.6px;color:#fff;font-family:'DejaVu Sans Condensed','DejaVu Sans',sans-serif;font-weight:bold;transform:scaleX(0.965);transform-origin:0 0;">Pulse Ctrl+/ para obtener más ayuda.</span>
<!-- tooltip illustration: utility knife -->
<svg class="a" style="left:0;top:0" width="1520" height="1017" viewBox="0 0 1520 1017">
<defs>
<linearGradient id="kY" x1="0" y1="0" x2="0.350" y2="1"><stop offset="0" stop-color="#ffdc22"/><stop offset=".4" stop-color="#f8cb12"/><stop offset=".62" stop-color="#efbf0d"/><stop offset="1" stop-color="#dba404"/></linearGradient>
<linearGradient id="kY2" x1="0" y1="0" x2="1" y2="1"><stop offset="0" stop-color="#fdd21a"/><stop offset=".6" stop-color="#f3c010"/><stop offset="1" stop-color="#d9a204"/></linearGradient>
<linearGradient id="kBlade" x1="0" y1="0" x2="1" y2="0"><stop offset="0" stop-color="#d2d1cb"/><stop offset=".6" stop-color="#d0cfc9"/><stop offset=".62" stop-color="#bcbbb3"/><stop offset="1" stop-color="#b2b1a8"/></linearGradient>
<linearGradient id="kSlot" x1="0" y1="0" x2="1" y2="0"><stop offset="0" stop-color="#1a1400"/><stop offset=".55" stop-color="#5a4700"/><stop offset=".75" stop-color="#0d0a00"/><stop offset=".8" stop-color="#b89400"/><stop offset="1" stop-color="#e2ba08"/></linearGradient>
<linearGradient id="kBlk" x1="0" y1="0" x2="0" y2="1"><stop offset="0" stop-color="#1c1c1c"/><stop offset="1" stop-color="#090909"/></linearGradient>
</defs>
<!-- blade -->
<path d="M623.900 717L654.100 669.600 666 672.600 680 715.500z" fill="url(#kBlade)"/>
<path d="M623.900 717L680 715.500 680 717.800 625.700 719z" fill="#e4e3df"/>
<path d="M625.500 719.200L674 717.900" stroke="#6d6c66" stroke-width=".8"/>
<!-- yellow body silhouette -->
<path d="M657.600 663.700L668.300 661.300 690.800 658.400 693.200 657.800C716 653.500 745 653 765.800 655.500 775 657 782 658.800 789.500 661.400L813.200 670.900 836.900 680.400 846.300 685.100C860 692 875 702 890.100 719 905 731 918 744 922.500 750.100 926 757 927 764 926.600 767.600 926.500 774 925 782 922.500 786.100L913.300 790.700 892.100 776.800 841.400 740 810.800 733.500 793.100 741.400 782.500 742.700 771 737.400C767 735 764 734 761.200 734.300L748.800 741 747.600 741.800 688.400 727.600 679 721.700z" fill="url(#kY)"/>
<!-- lower bulge highlight / shading -->
<path d="M688.400 727.600L747.600 741.800 761.200 734.300C764 734 767 735 771 737.400L782.500 742.700 793.100 741.400 801.900 736.500 790 734 774 729.500 760 728.500 748 734 695 719.500z" fill="#d9a608" opacity=".75"/>
<path d="M700 672C730 668 770 668 800 680 830 692 850 705 870 720L880 740C850 716 820 700 790 692 760 684 730 684 703 690z" fill="#ffe544" opacity=".3"/>
<path d="M690 723.500L747.500 737.500 760.500 730.500C766 729 772 731.500 780 736.500" stroke="#9b7700" stroke-width=".7" fill="none"/>
<!-- black top insert -->
<path d="M693.200 657.800C716 653.200 745 652.800 764.200 654L766 656.600 761.300 667.800C742 667 720 666 700.300 664.900z" fill="url(#kBlk)"/>
<path d="M697 659.500C718 656 745 655.500 763 656.500" stroke="#555" stroke-width="1" fill="none"/>
<!-- black back grip (upper crescent) -->
<path d="M840 681.600L846.300 685.100C860 692 875 704 890.100 719 905 731.500 917 745 924 756 912 750.500 897 741.500 880.500 729.500 866 718 854 706.500 845 695z" fill="#1d1d1d"/>
<!-- black lower grip -->
<path d="M782.500 742.700C788 742.500 791 742 793.100 741.400 797 739.500 800 737.500 801.900 736.500 805 735 808 734 810.800 733.500 814 732.800 817 732.500 819.600 732.600 823 732.800 826 733.200 828.500 733.900 832 735 835 736 837.300 737.400L841.400 740 855.300 750.100 873.700 763 892.100 776.800 905.900 787C909 789.500 911 790.500 913.300 790.700 915.500 790.600 917.500 790 918.800 788.800 921 786 922.500 784 923.400 781.400L925.700 772.200 926.600 767.600C926.500 774 925 782 922.500 786.100 921 789.500 919.500 791.500 917.900 793.400 915.500 796 913 798 910.500 799.900 907.500 802 904.500 803.500 901.300 804.500 898 805.500 895 806 892.100 805.900 889.500 805.800 887 805.300 884.700 804.500 882 803 880 801.500 878.300 799.900L873.700 794.300C871 791.500 868 789.500 864.500 787.900L855.300 783.300 836.800 775.500 818.400 764.400 800 753.800z" fill="url(#kBlk)"/>
<path d="M800 745C812 742 828 745 842 753L872 773C885 782 893 789 899 796" stroke="#2e2e2e" stroke-width=".8" fill="none"/>
<!-- seam lines -->
<path d="M668.300 661.300L690 722M672 660.800L695 722.500" stroke="#9a7600" stroke-width=".6" fill="none"/>
<path d="M690.800 659.500C705 662 716 664 722 666M766 657.500C790 664 815 674 838 686" stroke="#b58c00" stroke-width=".6" fill="none" stroke-dasharray="2 1"/>
<!-- blue blade holder -->
<path d="M655.300 667.200L665.900 667.800 667.700 668.400 687.800 721.700 687.200 722.300 673.600 718.600 673.600 715.800 679.500 715.800 665.900 672.600 655.300 672z" fill="#1a3fbf"/>
<path d="M665.900 667.800L667.700 668.400 687.800 721.700 684 721z" fill="#1233a0"/>
<!-- slider slot -->
<path d="M738.200 685C760 684.800 780 686 794 688.700 800 690.500 802.500 694.500 801.500 699.500 800.500 705 797 708 794 708.800 775 708.500 755 707.500 742 706.500 732 704.500 727.500 700 728 694.500 728.500 689 732 686 738.200 685z" fill="#e9bf0a" stroke="#8a6a00" stroke-width=".7"/>
<path d="M741 688C760 688 778 689 792 691 797 692.500 798.500 695.500 798 699 797.500 702.500 795 705 792 705.500 776 705.500 758 705 744 704 737 702.500 733 699 733.500 695 734 691 736.500 688.500 741 688z" fill="url(#kSlot)"/>
<!-- blue button -->
<path d="M740 688.300L752 689.300 752.400 704.300 740 703.500z" fill="#1c44c8"/>
<ellipse cx="736.500" cy="695.800" rx="7" ry="7.800" fill="#1f4bd6"/>
<ellipse cx="744.500" cy="696.500" rx="6" ry="7.500" fill="#1a40c2"/>
<ellipse cx="736" cy="695.800" rx="5" ry="6.300" fill="none" stroke="#1233a0" stroke-width=".6"/>
<!-- Autodesk logo -->
<path d="M834.300 702.500L839.900 704.500 839.800 728.400 835.200 726.300 835.400 722.400 829.200 719.800 829 722 825.600 720.600 826.200 715.500zM834.800 709.500L830 717 835.500 719.300z" fill="#161616" fill-rule="evenodd"/>
<text transform="translate(845.600 729.600) rotate(32.600) scale(.76 1)" font-family="Liberation Sans,Arial,sans-serif" font-weight="bold" font-size="15.500" fill="#161616">AUTODESK</text>
</svg>
<!-- browser / comments panels -->
<div class="a" style="left:3px;top:167px;width:300px;height:50px;background:#f2f2f2;border:1px solid #cfcfcf;box-sizing:border-box"></div>
<div class="a" style="left:3px;top:191px;width:300px;height:1px;background:#cfcfcf"></div>
<svg style="left:9px;top:174.5px" width="9" height="9" viewBox="0 0 9 9"><circle cx="4.500" cy="4.500" r="4.500" fill="#222"/><path d="M4.500 2v5M2 4.500h5" stroke="#fff" stroke-width="1.200"/></svg>
<svg style="left:9px;top:199.5px" width="9" height="9" viewBox="0 0 9 9"><circle cx="4.500" cy="4.500" r="4.500" fill="#222"/><path d="M4.500 2v5M2 4.500h5" stroke="#fff" stroke-width="1.200"/></svg>
<span class="t" style="left:27.7px;top:172.2px;font-size:11px;color:#555;transform:scaleX(0.946);transform-origin:0 0;">NAVEGADOR</span>
<span class="t" style="left:27.9px;top:197.2px;font-size:11px;color:#555;transform:scaleX(0.894);transform-origin:0 0;">COMENTARIOS</span>
<!-- EDITAR OPERACIÓN dialog -->
<div class="a" style="left:1266px;top:241px;width:250px;height:313px;background:#f2f2f2;border:1px solid #cdcdcd;box-sizing:border-box"></div>
<div class="a" style="left:1267px;top:265px;width:248px;height:1px;background:#d4d4d4"></div>
<div class="a" style="left:1268px;top:481px;width:234px;height:1px;background:#c4c4c4"></div>
<div class="a" style="left:1267px;top:517px;width:248px;height:1px;background:#c4c4c4"></div>
<div class="a" style="left:1269px;top:249px;width:1px;height:9px;background:#888"></div><div class="a" style="left:1271px;top:249px;width:1px;height:9px;background:#888"></div>
<svg style="left:1277.500px;top:248.500px" width="9" height="9" viewBox="0 0 9 9"><circle cx="4.500" cy="4.500" r="4.500" fill="#222"/><path d="M2 4.500h5" stroke="#fff" stroke-width="1.300"/></svg>
<span class="t" style="left:1290.4px;top:246.2px;font-size:11px;color:#555;transform:scaleX(0.888);transform-origin:0 0;">EDITAR OPERACIÓN</span>
<svg style="left:1501px;top:250px" width="10" height="7" viewBox="0 0 10 7"><path d="M0 0l4.500 3.500L0 7zM5 0l4.500 3.500L5 7z" fill="#222"/></svg>
<span class="t" style="left:1278.9px;top:274.2px;font-size:11px;color:#333;transform:scaleX(0.960);transform-origin:0 0;">Tipo</span>
<span class="t" style="left:1279.0px;top:304.2px;font-size:11px;color:#333;transform:scaleX(0.960);transform-origin:0 0;">Perfiles</span>
<span class="t" style="left:1279.0px;top:334.2px;font-size:11px;color:#333;transform:scaleX(0.960);transform-origin:0 0;">Inicio</span>
<span class="t" style="left:1279.0px;top:364.2px;font-size:11px;color:#333;transform:scaleX(0.960);transform-origin:0 0;">Dirección</span>
<span class="t" style="left:1278.9px;top:394.2px;font-size:11px;color:#333;transform:scaleX(0.960);transform-origin:0 0;">Tipo de extensión</span>
<span class="t" style="left:1279.0px;top:424.2px;font-size:11px;color:#333;transform:scaleX(0.960);transform-origin:0 0;">Distancia</span>
<span class="t" style="left:1278.8px;top:454.2px;font-size:11px;color:#333;transform:scaleX(0.960);transform-origin:0 0;">Ángulo de inclinaci...</span>
<span class="t" style="left:1278.9px;top:494.2px;font-size:11px;color:#333;transform:scaleX(0.960);transform-origin:0 0;">Operación</span>
<div class="a" style="left:1383.500px;top:267.500px;width:23px;height:27px;background:#0696d7;border-radius:1px"></div>
<svg style="left:1386px;top:272px" width="19" height="18" viewBox="0 0 19 18"><path d="M0 14.500h10.500l3-2.800v2L10.500 16.500H0z" fill="#e6d7c3"/><path d="M0 3.500L3 .600h10.500L10.500 3.500z" fill="#b7e0ff"/><path d="M0 3.500h10.500v11H0z" fill="#90cdfb"/><path d="M10.500 3.500L13.500 .600v11L10.500 14.500z" fill="#6db6ee"/><path d="M16.500 3v10" stroke="#fff" stroke-width="1.200"/><path d="M16.500 .500l1.900 3.500h-3.800z" fill="#fff"/></svg>
<svg style="left:1415.500px;top:272px" width="18" height="18" viewBox="0 0 18 18"><path d="M0 3.500L2.500 1h9.500L9.500 3.500z" fill="#8fcaf5"/><path d="M0 3.500h3.500l2.500 1 3.500-1v10.500l-3.500 1.200-2.500-1.200H0z" fill="#4a90cc"/><path d="M9.500 3.500L12 1v10.500L9.500 14z" fill="#3577b8"/><path d="M0 14.500l3.500 0 2.500 1.200 3.500-1.200 2.500-2.500" fill="none" stroke="#bdbdbd" stroke-width="1.500"/><path d="M15.500 3v11" stroke="#222" stroke-width="1.100"/><path d="M15.500 .500l1.800 3.500h-3.600z" fill="#222"/></svg>
<div class="a" style="left:1383.500px;top:297.500px;width:71px;height:27px;background:#0696d7;border-radius:1px"></div>
<svg style="left:1390px;top:302px" width="12" height="17" viewBox="0 0 12 17"><path d="M1.500 1v12.500l3-2.800 2.200 5 2-.9-2.200-4.900h4.200z" fill="#fff" stroke="#333" stroke-width="1" stroke-linejoin="round"/></svg>
<span class="t" style="left:1404.9px;top:304.2px;font-size:11px;color:#fff;transform:scaleX(0.954);transform-origin:0 0;">1 selec...</span>
<svg style="left:1465.500px;top:306.500px" width="9" height="9" viewBox="0 0 9 9"><path d="M.7.7l7.600 7.600M8.300.7L.7 8.300" stroke="#333" stroke-width="1.500"/></svg>
<div class="a" style="left:1383.500px;top:327.5px;width:99.500px;height:27px;background:#fff;border:1px solid #e0e0e0;border-radius:2px;box-sizing:border-box"></div>
<svg style="left:1389px;top:334px" width="12" height="14" viewBox="0 0 12 14"><path d="M1.500 0v14" stroke="#0b2a5c" stroke-width="1.600"/><path d="M2 7h6.500" stroke="#0b2a5c" stroke-width="1.100"/><path d="M11 7L7.500 4.800v4.400z" fill="#0b2a5c"/></svg>
<span class="t" style="left:1406.7px;top:334.2px;font-size:11px;color:#333;transform:scaleX(0.960);transform-origin:0 0;width:56.4px;overflow:hidden;">Plano de perfil</span>
<span class="t" style="left:1460.7px;top:334.2px;font-size:11px;color:#333;transform:scaleX(0.960);transform-origin:0 0;">...</span>
<svg style="left:1471.500px;top:339.0px" width="6" height="4" viewBox="0 0 6 4"><path d="M0 0h6L3 4z" fill="#222"/></svg>
<div class="a" style="left:1383.500px;top:357.5px;width:99.500px;height:27px;background:#fff;border:1px solid #e0e0e0;border-radius:2px;box-sizing:border-box"></div>
<svg style="left:1386px;top:362px" width="17" height="18" viewBox="0 0 17 18"><path d="M6 3.500l4.500-2.500 5.500 2v7.500l-5.500-3z" fill="#f0a878" stroke="#c47a45" stroke-width=".6"/><path d="M2 16L10.500 7.500" stroke="#333" stroke-width="1.200"/><path d="M.8 17.200l1-4 3 3z" fill="#333"/></svg>
<span class="t" style="left:1406.7px;top:364.2px;font-size:11px;color:#333;transform:scaleX(0.949);transform-origin:0 0;">Un lado</span>
<svg style="left:1471.500px;top:369.0px" width="6" height="4" viewBox="0 0 6 4"><path d="M0 0h6L3 4z" fill="#222"/></svg>
<div class="a" style="left:1383.500px;top:387.5px;width:99.500px;height:27px;background:#fff;border:1px solid #e0e0e0;border-radius:2px;box-sizing:border-box"></div>
<svg style="left:1387px;top:393px" width="16" height="16" viewBox="0 0 16 16"><path d="M1 0v16M15 0v16" stroke="#0b2a5c" stroke-width="1.700"/><path d="M4 8h8" stroke="#222" stroke-width="1"/><path d="M2 8l3-2.200v4.400zM14 8l-3-2.200v4.400z" fill="#222"/></svg>
<span class="t" style="left:1406.7px;top:394.2px;font-size:11px;color:#333;transform:scaleX(0.973);transform-origin:0 0;">Distancia</span>
<svg style="left:1471.500px;top:399.0px" width="6" height="4" viewBox="0 0 6 4"><path d="M0 0h6L3 4z" fill="#222"/></svg>
<div class="a" style="left:1383.500px;top:487.5px;width:99.500px;height:27px;background:#fff;border:1px solid #e0e0e0;border-radius:2px;box-sizing:border-box"></div>
<svg style="left:1386px;top:492px" width="18" height="18" viewBox="0 0 18 18"><path d="M1.500 5.500c0-2.300 9.500-2.300 9.500 0v9c0 2.300-9.500 2.300-9.500 0z" fill="#e0e0e0" stroke="#555" stroke-width=".9"/><ellipse cx="6.250" cy="5.500" rx="4.750" ry="1.800" fill="#f0f0f0" stroke="#555" stroke-width=".8"/><path d="M12.500 0l.9 2.600 2.400-1.400-1 2.600 2.800.3-2.400 1.400 1.800 2.100-2.700-.5-.1 2.800-1.700-2.200-1.700 2.200-.1-2.800-2.700.5 1.800-2.100-2.400-1.400 2.800-.3-1-2.600 2.400 1.400z" fill="#f59b0b"/></svg>
<span class="t" style="left:1406.9px;top:494.2px;font-size:11px;color:#333;transform:scaleX(0.960);transform-origin:0 0;width:55.2px;overflow:hidden;">Cuerpo nuevo</span>
<span class="t" style="left:1459.5px;top:494.2px;font-size:11px;color:#333;transform:scaleX(0.960);transform-origin:0 0;">...</span>
<svg style="left:1471.500px;top:499.0px" width="6" height="4" viewBox="0 0 6 4"><path d="M0 0h6L3 4z" fill="#222"/></svg>
<div class="a" style="left:1384px;top:419px;width:99px;height:25px;background:#fff;border:1px solid #c9c9c9;box-sizing:border-box"></div>
<span class="t" style="left:1386.9px;top:424.2px;font-size:11px;color:#333;transform:scaleX(0.930);transform-origin:0 0;">12 mm</span>
<div class="a" style="left:1384px;top:449px;width:99px;height:25px;background:#fff;border:1px solid #c9c9c9;box-sizing:border-box"></div>
<span class="t" style="left:1387.2px;top:454.2px;font-size:11px;color:#333;transform:scaleX(0.930);transform-origin:0 0;">0.0 deg</span>
<svg style="left:1275px;top:530px" width="12" height="12" viewBox="0 0 12 12"><circle cx="6" cy="6" r="6" fill="#111"/><circle cx="6" cy="3.200" r="1.100" fill="#fff"/><path d="M4.500 5.200h2.300v3.600h1v1H4.500v-1h1V6.200h-1z" fill="#fff"/></svg>
<div class="a" style="left:1374.500px;top:525.500px;width:59px;height:20px;background:#e1e1e1;border:1px solid #b4b4b4;box-sizing:border-box"></div>
<span class="t" style="left:1383.0px;top:528.8px;font-size:12px;color:#555;transform:scaleX(1.003);transform-origin:0 0;">Aceptar</span>
<div class="a" style="left:1444px;top:526.500px;width:60px;height:19px;background:#e9e9e9;border:1px solid #b4b4b4;box-sizing:border-box"></div>
<span class="t" style="left:1449.0px;top:528.8px;font-size:12px;color:#555;transform:scaleX(1.031);transform-origin:0 0;">Cancelar</span>
<!-- navigation bar -->
<div class="a" style="left:642px;top:942px;width:237px;height:24px;background:#f2f2f2"></div>
<svg style="left:644.500px;top:945.500px" width="17" height="17" viewBox="0 0 17 17"><path d="M8 1l-2.500 3.500h1.700v11h1.600v-11h1.700z" fill="#fff" stroke="#222" stroke-width=".9"/><path d="M10.500 7.500c3.500 .500 5.500 1.500 5.500 2.800 0 1.800-4 2.700-8 2.700-1.500 0-3-.1-4-.4" fill="none" stroke="#222" stroke-width="1.300"/><path d="M5.500 7.600C2.500 8.200 1 9.200 1 10.300" fill="none" stroke="#222" stroke-width="1.300"/><path d="M1.500 12.300l4-2.600v5z" fill="#222"/></svg>
<svg style="left:666.4px;top:951.5px" width="6" height="4" viewBox="0 0 6 4"><path d="M0 0h6L3 4z" fill="#222"/></svg>
<svg style="left:677.500px;top:945.500px" width="17" height="17" viewBox="0 0 17 17"><path d="M3 5l5-4.500v3l3-2.500v4" fill="#cfd4dc" stroke="#333" stroke-width=".9"/><rect x=".8" y="5" width="15.400" height="11" rx="1" fill="#eef0f4" stroke="#333" stroke-width="1.100"/><rect x="3.500" y="8.500" width="10" height="4.500" fill="#8b95a8" stroke="#333" stroke-width=".9"/></svg>
<svg style="left:703.500px;top:945px" width="18" height="18" viewBox="0 0 18 18"><path d="M5.500 9V3.200c0-1.500 2-1.500 2 0V2c0-1.600 2.200-1.600 2.200 0v1.200c0-1.500 2.200-1.500 2.200 0v1.500c0-1.400 2-1.400 2 0V10c0 3-1 4.500-2 6.500H6.500C5 14 3 12 1.500 10c-.8-1.200 .6-2.300 1.700-1.300z" fill="#fff" stroke="#333" stroke-width="1"/><path d="M7.500 3.500v4.500M9.700 3.500v4.500M11.900 4.500v3.500" stroke="#333" stroke-width=".8"/></svg>
<svg style="left:729.500px;top:945px" width="18" height="18" viewBox="0 0 18 18"><circle cx="6.200" cy="8.200" r="5" fill="#eaf6fb" stroke="#333" stroke-width="1.200"/><path d="M9.800 12l4 4.300" stroke="#222" stroke-width="2.400" stroke-linecap="round"/><path d="M12 3h5M14.500 .500v5M12 7.500h5" stroke="#222" stroke-width="1"/></svg>
<svg style="left:755.500px;top:945px" width="18" height="18" viewBox="0 0 18 18"><rect x=".6" y=".6" width="14.500" height="14.500" fill="none" stroke="#333" stroke-width=".9" stroke-dasharray="2 1.500"/><circle cx="7.500" cy="7.500" r="6" fill="#eaf6fb" stroke="#333" stroke-width="1.200"/><path d="M12 12l4.300 4.300" stroke="#222" stroke-width="2.400" stroke-linecap="round"/></svg>
<svg style="left:777.3px;top:951.5px" width="6" height="4" viewBox="0 0 6 4"><path d="M0 0h6L3 4z" fill="#222"/></svg>
<svg style="left:789px;top:946px" width="17" height="17" viewBox="0 0 17 17"><rect x=".7" y=".7" width="14.800" height="11.800" rx="1.200" fill="#fff" stroke="#4a4a4a" stroke-width="1.200"/><rect x="2.800" y="2.700" width="10.600" height="7.600" rx="1.300" fill="#a5c2e8" stroke="#1f3d7a" stroke-width="1"/><path d="M5 12.600h6.200l.9 2.600H4.100z" fill="#fff" stroke="#4a4a4a" stroke-width="1"/></svg>
<svg style="left:807.5px;top:951.5px" width="6" height="4" viewBox="0 0 6 4"><path d="M0 0h6L3 4z" fill="#222"/></svg>
<svg style="left:820px;top:946px" width="17" height="17" viewBox="0 0 17 17"><rect x=".4" y=".4" width="15.400" height="15.400" rx="1.300" fill="#63666d"/><rect x="1.4" y="1.4" width="1.800" height="1.800" fill="#ffffff"/><rect x="4.4" y="1.4" width="1.800" height="1.800" fill="#ffffff"/><rect x="7.4" y="1.4" width="1.800" height="1.800" fill="#ffffff"/><rect x="10.4" y="1.4" width="1.800" height="1.800" fill="#ffffff"/><rect x="13.4" y="1.4" width="1.800" height="1.800" fill="#ffffff"/><rect x="1.4" y="4.4" width="1.800" height="1.800" fill="#ffffff"/><rect x="4.4" y="4.4" width="1.800" height="1.800" fill="#ffffff"/><rect x="7.4" y="4.4" width="1.800" height="1.800" fill="#ffffff"/><rect x="10.4" y="4.4" width="1.800" height="1.800" fill="#ffffff"/><rect x="13.4" y="4.4" width="1.800" height="1.800" fill="#ffffff"/><rect x="1.4" y="7.4" width="1.800" height="1.800" fill="#eef0f5"/><rect x="4.4" y="7.4" width="1.800" height="1.800" fill="#eef0f5"/><rect x="7.4" y="7.4" width="1.800" height="1.800" fill="#eef0f5"/><rect x="10.4" y="7.4" width="1.800" height="1.800" fill="#eef0f5"/><rect x="13.4" y="7.4" width="1.800" height="1.800" fill="#eef0f5"/><rect x="1.4" y="10.4" width="1.800" height="1.800" fill="#d5d9e3"/><rect x="4.4" y="10.4" width="1.800" height="1.800" fill="#d5d9e3"/><rect x="7.4" y="10.4" width="1.800" height="1.800" fill="#d5d9e3"/><rect x="10.4" y="10.4" width="1.800" height="1.800" fill="#d5d9e3"/><rect x="13.4" y="10.4" width="1.800" height="1.800" fill="#d5d9e3"/><rect x="1.4" y="13.4" width="1.800" height="1.800" fill="#c3c9d8"/><rect x="4.4" y="13.4" width="1.800" height="1.800" fill="#c3c9d8"/><rect x="7.4" y="13.4" width="1.800" height="1.800" fill="#c3c9d8"/><rect x="10.4" y="13.4" width="1.800" height="1.800" fill="#c3c9d8"/><rect x="13.4" y="13.4" width="1.800" height="1.800" fill="#c3c9d8"/></svg>
<svg style="left:838.5px;top:951.5px" width="6" height="4" viewBox="0 0 6 4"><path d="M0 0h6L3 4z" fill="#222"/></svg>
<svg style="left:850.500px;top:946.500px" width="16" height="14" viewBox="0 0 16 14"><rect x="0.7" y="0.7" width="6.500" height="5.500" rx=".6" fill="#bcd0f2" stroke="#1f3d7a" stroke-width="1"/><rect x="2.7" y="2.5" width="2.600" height="1.900" fill="#cfdef7" stroke="#9db4e0" stroke-width=".4"/><rect x="0.7" y="7.4" width="6.500" height="5.500" rx=".6" fill="#bcd0f2" stroke="#1f3d7a" stroke-width="1"/><rect x="2.7" y="9.200000000000001" width="2.600" height="1.900" fill="#cfdef7" stroke="#9db4e0" stroke-width=".4"/><rect x="8.1" y="0.7" width="6.500" height="5.500" rx=".6" fill="#bcd0f2" stroke="#1f3d7a" stroke-width="1"/><rect x="10.1" y="2.5" width="2.600" height="1.900" fill="#cfdef7" stroke="#9db4e0" stroke-width=".4"/><rect x="8.1" y="7.4" width="6.500" height="5.500" rx=".6" fill="#bcd0f2" stroke="#1f3d7a" stroke-width="1"/><rect x="10.1" y="9.200000000000001" width="2.600" height="1.900" fill="#cfdef7" stroke="#9db4e0" stroke-width=".4"/></svg>
<svg style="left:869.3px;top:951.5px" width="6" height="4" viewBox="0 0 6 4"><path d="M0 0h6L3 4z" fill="#222"/></svg>
<span class="t" style="left:1162.6px;top:925.8px;font-size:20px;color:#c3c3c3;line-height:24px;height:24px;transform:scaleX(0.986);transform-origin:0 0;">Activar Windows</span>
<span class="t" style="left:1162.5px;top:951.6px;font-size:15px;color:#c9c9c9;line-height:18px;height:18px;transform:scaleX(0.984);transform-origin:0 0;">Ve a Configuración para activar Windows.</span>
<span class="t" style="left:1336.9px;top:947.1px;font-size:11px;color:#222;font-weight:bold;transform:scaleX(1.014);transform-origin:0 0;">1 Perfil | Área : 22600.00 mm^2</span>
<!-- timeline -->
<div class="a" style="left:2px;top:970px;width:1518px;height:47px;background:#f2f2f2"></div>
<div class="a" style="left:2px;top:969.500px;width:1518px;height:1.500px;background:#c2c2c2"></div>
<svg style="left:12px;top:988px" width="115" height="17" viewBox="0 0 115 17"><g fill="#333"><rect x=".6" y="1" width="1.600" height="14.500"/><path d="M13.500 1v14.500L2.800 8.250z"/><path d="M35 2.500v11.500L25 8.250z"/><rect x="36.500" y="5" width="1.600" height="6.500"/><path d="M51.500 0v16.500l11.500-8.250z"/><rect x="74.500" y="5" width="1.600" height="6.500"/><path d="M77.500 2.500v11.500l10-5.750z"/><path d="M100.600 1v14.500l10.700-7.250z"/><rect x="111.400" y="1" width="1.600" height="14.500"/></g></svg>
<div class="a" style="left:144px;top:983px;width:24px;height:24px;background:#0696d7;border-radius:2.500px"></div>
<svg style="left:144px;top:983px" width="24" height="24" viewBox="0 0 24 24"><path d="M7.200 5.400h8.500M5.400 7.300v8.500M17.600 7.300v3.400M7.200 17.500h3.900" fill="none" stroke="#6a6a6a" stroke-width="1.200"/><g fill="#2a8de0"><rect x="4.700" y="4.700" width="1.400" height="1.400"/><rect x="16.900" y="4.700" width="1.400" height="1.400"/><rect x="4.700" y="16.800" width="1.400" height="1.400"/></g><path d="M14 17.800l3.800-3.600 2 2.100-3.800 3.600z" transform="translate(-1.500 -2.300)" fill="#f6bf3c"/><path d="M16.900 12.300l1-1c.6-.5 2.700 1.600 2 2.200l-1 .9z" fill="#f0342c"/><path d="M12.300 19.400l.5-2.400 1.900 2z" fill="#6a6a6a"/></svg>
<svg style="left:172px;top:987px" width="17" height="17" viewBox="0 0 17 17"><path d="M.2 14.100h8.700l3-2.900v1.600l-3 2.900H.2z" fill="#bdbdbd"/><path d="M.2 3L3.200 .3h8.500L8.900 3z" fill="#8fcaf5"/><path d="M.2 3h8.700v9.700H.2z" fill="#6cb1e6"/><path d="M8.900 3l2.800-2.700v9l-2.800 3.400z" fill="#4a90cc"/><path d="M14.400 2.500v10.500" stroke="#222" stroke-width="1.100"/><path d="M14.400 .400l1.700 2.800h-3.400z" fill="#222"/></svg>
<svg style="left:156px;top:1006px" width="26" height="8" viewBox="0 0 26 8"><path d="M1 1.300v5.100h23V.200" fill="none" stroke="#c9c9c9" stroke-width="1.600"/></svg>
<svg style="left:185px;top:981px" width="14" height="33" viewBox="0 0 14 33"><path d="M1 0h12v3.800L7.700 8.800H6.300L1 3.800z" fill="#666"/><rect x="6" y="8" width="2.100" height="24" fill="#666"/></svg>
<svg style="left:1490.500px;top:987.500px" width="17" height="17" viewBox="0 0 17 17"><g fill="#7d7d7d"><circle cx="8.500" cy="8.500" r="5.600"/><rect x="6.900" y="0" width="3.200" height="17" rx=".8"/><rect x="6.900" y="0" width="3.200" height="17" rx=".8" transform="rotate(45 8.500 8.500)"/><rect x="6.900" y="0" width="3.200" height="17" rx=".8" transform="rotate(90 8.500 8.500)"/><rect x="6.900" y="0" width="3.200" height="17" rx=".8" transform="rotate(135 8.500 8.500)"/></g><circle cx="8.500" cy="8.500" r="2.500" fill="#f2f2f2"/></svg>
</body>
</html>
